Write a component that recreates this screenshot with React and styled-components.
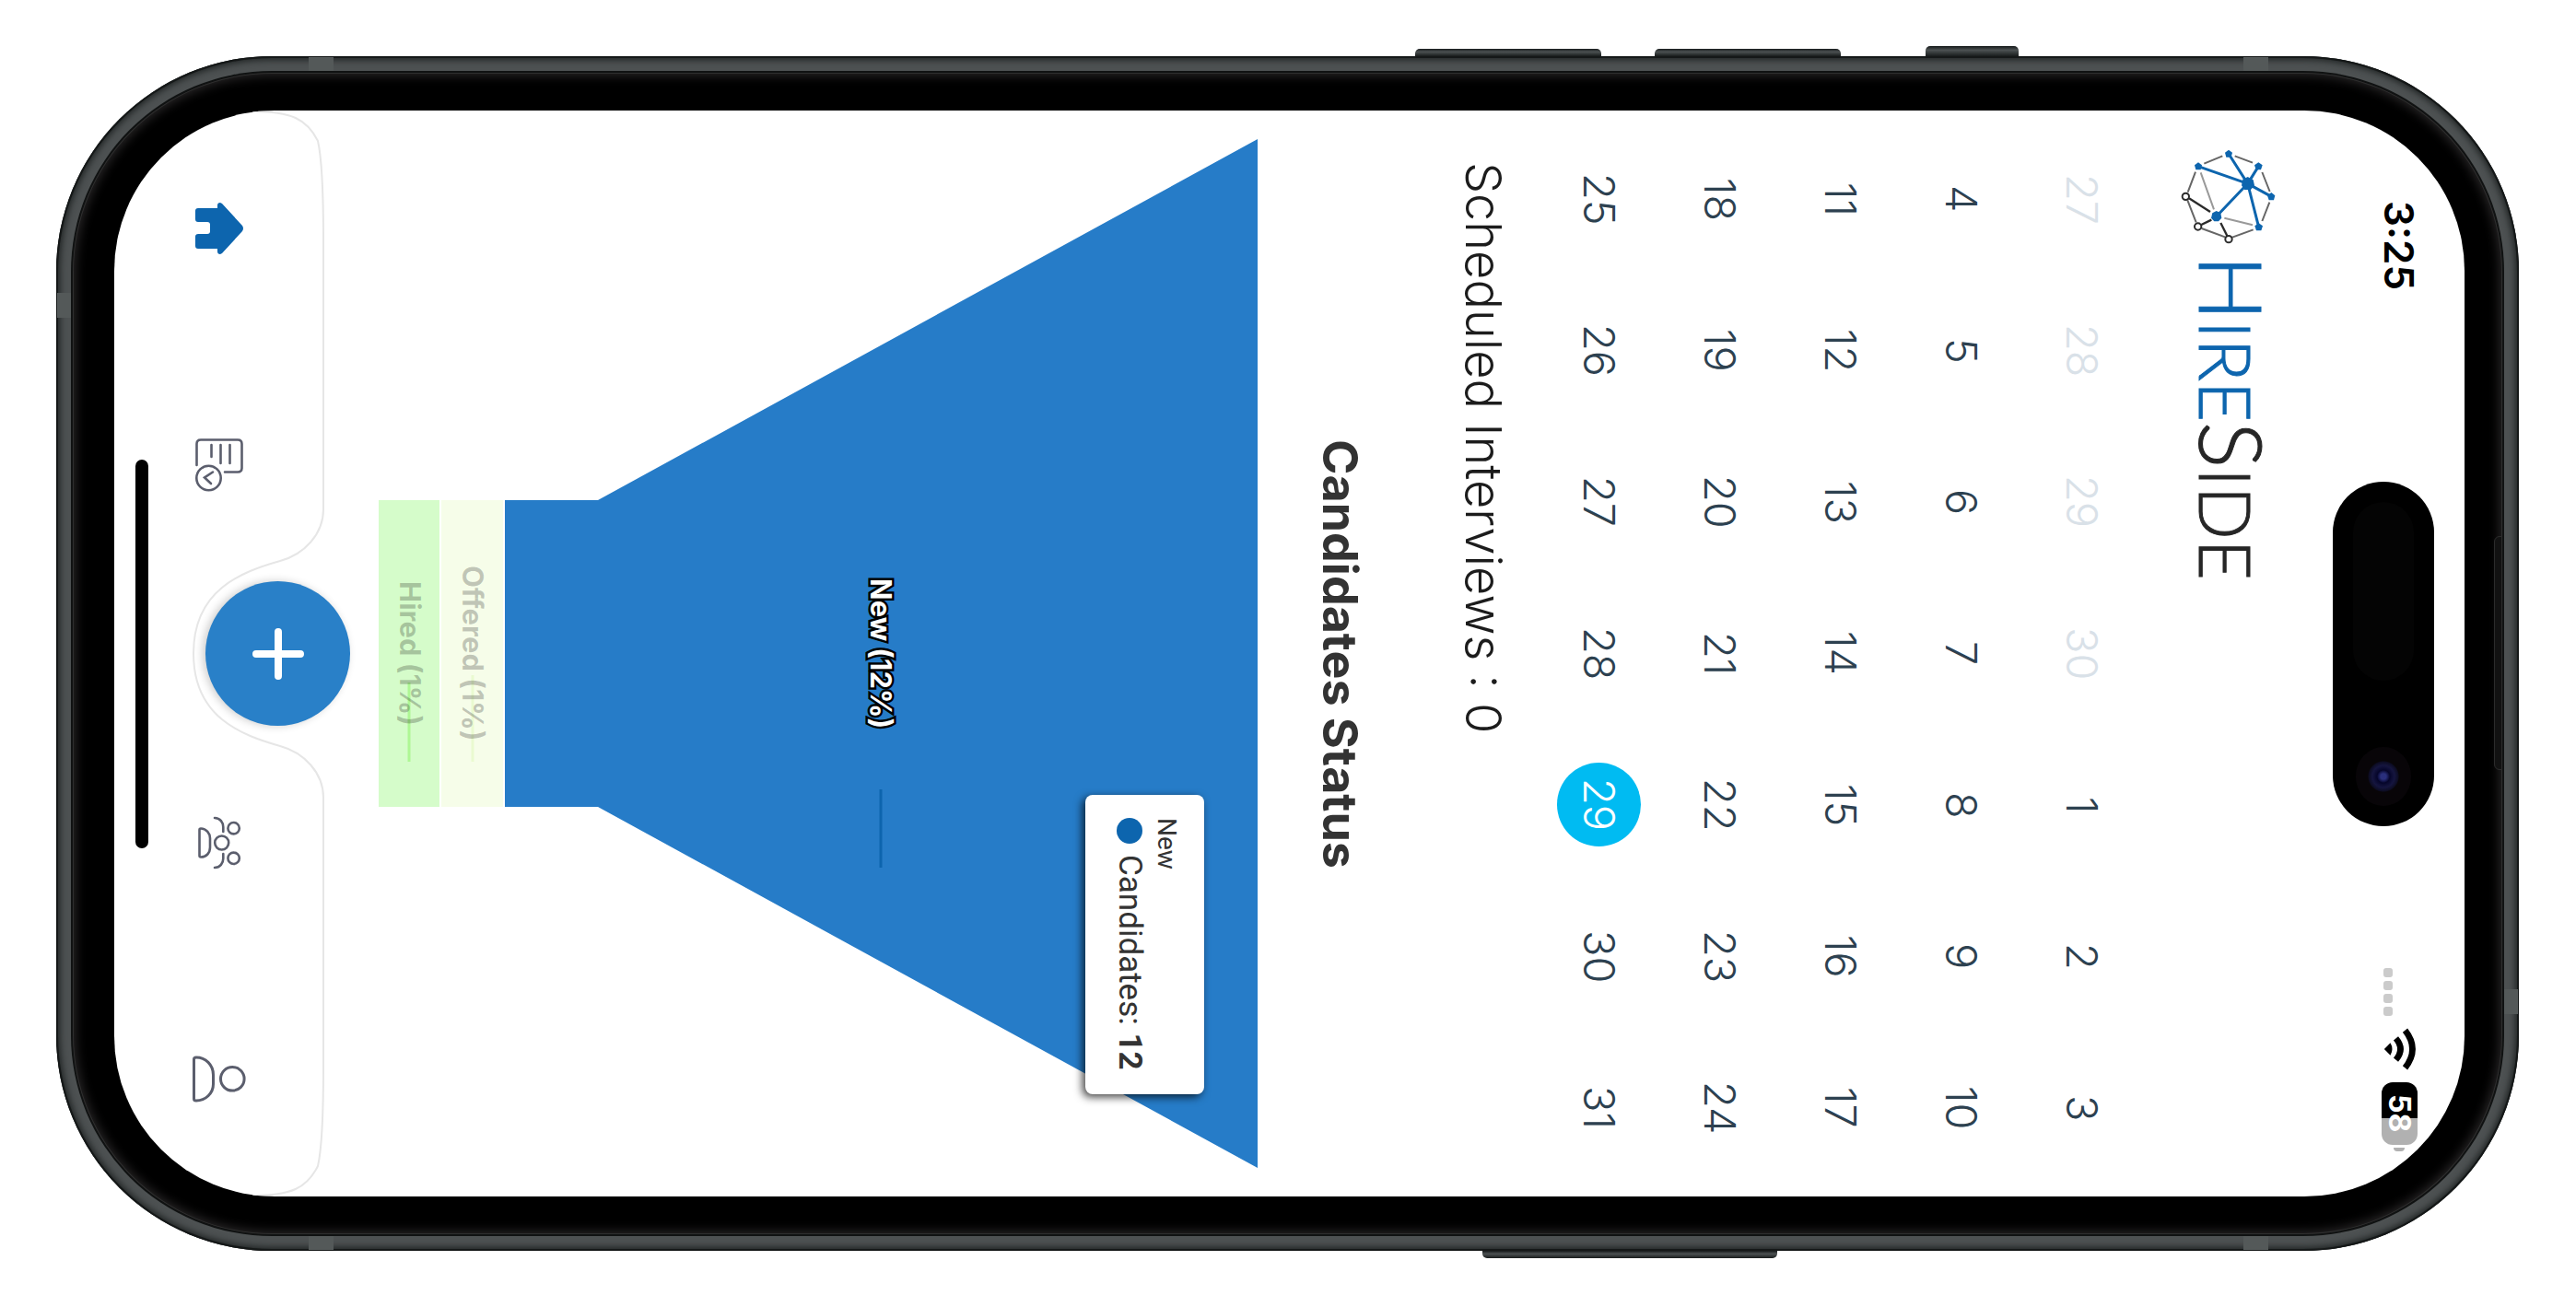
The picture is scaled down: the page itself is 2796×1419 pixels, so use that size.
import React from "react";
import styled, { createGlobalStyle, css } from "styled-components";

const GlobalStyle = createGlobalStyle`
  *, *::before, *::after { box-sizing: border-box; }
  body { margin: 0; background: #fff; }
  button { font: inherit; color: inherit; border: 0; padding: 0; background: none; cursor: pointer; }
`;

/* ---------- Device ---------- */

const Page = styled.main`
  display: flex;
  height: 100vh;
  padding: 61px 62px 61px 61px;
  background: #fff;
`;

const Phone = styled.div`
  position: relative;
  display: flex;
  flex: 1;
  min-height: 0;
  padding: 18px;
  border-radius: 234px;
  background: #4d5152;
  box-shadow: inset 0 0 0 2px #151818, inset 0 0 7px 4px #1f2323;
`;

const SideButton = styled.span`
  position: absolute;
  left: ${(p) => p.$from}%;
  width: ${(p) => p.$size}px;
  height: ${(p) => p.$depth}px;
  background: linear-gradient(#15191a, #4c5152 40%, #191d1d);
  ${(p) =>
    p.$edge === "top"
      ? css`bottom: 100%; border-radius: 5px 5px 0 0;`
      : css`top: 100%; border-radius: 0 0 5px 5px;`}
`;

const Band = styled.span`
  position: absolute;
  background: #545959;
  ${(p) =>
    p.$edge === "top" || p.$edge === "bottom"
      ? css`${p.$edge}: 1px; width: 27px; height: 16px;`
      : css`${p.$edge}: 1px; width: 16px; height: 27px;`}
  ${(p) => css`${p.$side}: ${p.$at}px;`}
`;

const Bezel = styled.div`
  position: relative;
  display: flex;
  flex: 1;
  min-height: 0;
  padding: 41px 41px 41px 45px;
  border-radius: 216px;
  background: #000;
  box-shadow: 0 0 0 2px #101212, inset 0 0 0 1px #2e2e2e, inset 0 0 12px 3px #2a2829;
`;

const Earpiece = styled.span`
  position: absolute;
  right: 0;
  top: 503px;
  width: 9px;
  height: 254px;
  background: #121212;
  border: 1px solid #2c2c2c;
  border-radius: 6px 0 0 6px;
`;

const Screen = styled.div`
  position: relative;
  display: flex;
  flex-direction: column;
  flex: 1;
  overflow: hidden;
  writing-mode: vertical-rl;
  text-orientation: sideways;
  border-radius: 174px;
  background: #fff;
  color: #1c1c1c;
  font-family: Inter, "Liberation Sans", sans-serif;
`;

/* ---------- Status bar ---------- */

const StatusBar = styled.header`
  display: grid;
  grid-template-columns: 1fr auto 1fr;
  block-size: 177px;
  padding-block-start: 33px;
  align-items: start;
`;

const StatusSide = styled.div`
  display: flex;
  align-items: center;
  justify-content: ${(p) => (p.$end ? "flex-end" : "flex-start")};
  gap: 13px;
  block-size: 76px;
  padding-inline: 98px 49px;
`;

const Clock = styled.time`
  font-size: 44px;
  font-weight: 600;
  line-height: 52px;
  color: #000;
`;

const Island = styled.div`
  display: flex;
  align-items: center;
  justify-content: space-between;
  inline-size: 374px;
  block-size: 110px;
  padding-inline: 22px;
  border-radius: 55px;
  background: #000;
`;

const Sensor = styled.span`
  inline-size: 194px;
  block-size: 66px;
  border-radius: 33px;
  background: #040404;
`;

const Lens = styled.span`
  inline-size: 64px;
  block-size: 60px;
  border-radius: 50%;
  background: radial-gradient(circle, #2a2f7c 0 3px, #05052a 7px, #15153f 12px, #0c0c22 16px, #080508 17px);
`;

const Signal = styled.span`
  display: flex;
  gap: 4px;
  block-size: 34px;
  align-items: flex-end;
`;

const SignalDot = styled.i`
  inline-size: 10px;
  block-size: 10px;
  border-radius: 3px;
  background: #cbcbcb;
`;

const Battery = styled.span`
  display: flex;
  align-items: center;
  gap: 3px;
`;

const BatteryLevel = styled.span`
  display: flex;
  align-items: center;
  justify-content: center;
  inline-size: 68px;
  block-size: 39px;
  border-radius: 12px;
  background: linear-gradient(to bottom, #000 58%, #b1b1b1 58%);
  color: #fff;
  font-size: 32px;
  font-weight: 700;
  line-height: 39px;
`;

const BatteryTip = styled.i`
  inline-size: 4px;
  block-size: 12px;
  border-radius: 0 0 6px 6px;
  background: #b1b1b1;
`;

/* ---------- Brand ---------- */

const Brand = styled.div`
  display: flex;
  align-items: center;
  gap: 12px;
  block-size: 158px;
  padding-inline-start: 42px;
`;

const Wordmark = styled.h1`
  margin: 0;
  font-family: Lato, "Liberation Sans", sans-serif;
  font-size: 76px;
  font-weight: 300;
  line-height: 100px;
  color: #262626;
  -webkit-text-stroke: 1px currentColor;
`;

const Initial = styled.span`
  font-size: 94px;
`;

const WordBlue = styled.span`
  color: #0d65ae;
`;

/* ---------- Calendar ---------- */

const Calendar = styled.table`
  inline-size: calc(100% - 28px);
  margin-inline: 14px;
  margin-block-start: 15px;
  border-collapse: collapse;
  table-layout: fixed;
`;

const Week = styled.tr`
  block-size: 131px;
`;

const DayCell = styled.td`
  padding: 0;
  text-align: center;
  vertical-align: middle;
`;

const Day = styled.button`
  display: inline-flex;
  align-items: center;
  justify-content: center;
  inline-size: 91px;
  block-size: 91px;
  vertical-align: middle;
  writing-mode: vertical-rl;
  border-radius: 50%;
  font-size: 47px;
  font-weight: 300;
  line-height: 56px;
  color: ${(p) => (p.$muted ? "#d9e1e8" : "#2d4150")};
  ${(p) => p.$selected && css`background: #00bbf2; color: #fff;`}
`;

const Scheduled = styled.p`
  margin: 0;
  margin-block-start: 28px;
  padding-inline-start: 56px;
  font-size: 54px;
  font-weight: 300;
  line-height: 64px;
`;

/* ---------- Chart ---------- */

const ChartTitle = styled.h2`
  margin: 0;
  margin-block-start: 92px;
  text-align: center;
  font-size: 52px;
  font-weight: 700;
  line-height: 64px;
  color: #333;
`;

const Chart = styled.section`
  position: relative;
  display: flex;
  flex-direction: column;
  block-size: 954px;
  margin-block-start: 57px;
  margin-inline: 31px;
`;

const FunnelShape = styled.svg`
  position: absolute;
  inset: 0;
  width: 100%;
  height: 100%;
`;

const Stage = styled.div`
  position: relative;
  display: flex;
  align-items: center;
  justify-content: center;
  flex: ${(p) => p.$share} 1 0;
`;

const StageLabel = styled.span`
  font-size: 31px;
  font-weight: 700;
  line-height: 40px;
  ${(p) =>
    p.$active
      ? css`
          color: #fff;
          -webkit-text-stroke: 5px #000;
          paint-order: stroke fill;
        `
      : css`color: rgba(0, 0, 0, 0.22);`}
`;

const Tooltip = styled.div`
  position: absolute;
  inset-block-start: 58px;
  inset-inline-start: 712px;
  inline-size: 325px;
  block-size: 129px;
  padding-block-start: 23px;
  padding-inline-start: 25px;
  border-radius: 8px;
  background: #fff;
  box-shadow: -3px 3px 10px rgba(0, 0, 0, 0.75);
  color: #333;
  font-family: Roboto, "Liberation Sans", sans-serif;
`;

const TooltipName = styled.div`
  font-size: 28px;
  line-height: 36px;
`;

const TooltipValue = styled.div`
  display: flex;
  align-items: center;
  gap: 12px;
  font-size: 35px;
  line-height: 44px;
`;

const TooltipDot = styled.i`
  inline-size: 28px;
  block-size: 28px;
  border-radius: 50%;
  background: #0d65ae;
`;

/* ---------- Tab bar ---------- */

const TabBar = styled.nav`
  position: relative;
  display: grid;
  grid-template-columns: 1fr 1fr 155px 1fr 1fr;
  align-items: center;
  justify-items: center;
  block-size: 227px;
  margin-block-start: auto;
`;

const TabOutline = styled.svg`
  position: absolute;
  inset: 0;
  width: 100%;
  height: 100%;
  overflow: visible;
`;

const Tab = styled.button`
  position: relative;
  display: flex;
  align-items: center;
  justify-content: center;
  inline-size: 96px;
  block-size: 96px;
`;

const AddButton = styled.button`
  position: relative;
  display: flex;
  align-items: center;
  justify-content: center;
  align-self: start;
  inline-size: 157px;
  block-size: 157px;
  margin-block-start: -29px;
  border-radius: 50%;
  background: #2980c8;
  box-shadow: -3px 0 10px rgba(0, 0, 0, 0.2);
`;

const HomeIndicator = styled.span`
  position: absolute;
  inset-block-end: 23px;
  inset-inline: 0;
  margin-inline: auto;
  inline-size: 422px;
  block-size: 14px;
  border-radius: 7px;
  background: #000;
`;

/* ---------- Drawings ---------- */

const LogoMark = () => (
  <svg width="104" height="103" viewBox="52 66 312 309" fill="none" aria-hidden="true">
    <g stroke="#666" strokeWidth="6">
      <path d="M128 113 188 88M228 88 286 110M317 141 342 204M341 239 317 300M288 328 220 353M196 352 120 324M74 232 102 304M75 206 100 140" />
    </g>
    <path d="M117 142 160 262M194 290 286 313" stroke="#999" strokeWidth="6" />
    <path d="M79 226 148 270M119 312 152 296M203 348 182 306" stroke="#2b2b2b" strokeWidth="7" />
    <path d="M270 178 109 122M270 178 208 81M270 178 305 122M270 178 347 220M270 178 306 320M270 178 168 285" stroke="#0d65ae" strokeWidth="9" />
    <g fill="#0d65ae">
      <path d="M208 68 220 77 216 92H200L196 77Z" />
      <path d="M305 109 318 118 313 133H297L292 118Z" />
      <path d="M347 207 359 217 355 232H339L334 217Z" />
      <path d="M306 307 319 316 314 331H298L293 316Z" />
      <path d="M109 109 121 118 117 133H101L97 118Z" />
      <path d="M270 156 288 166 292 184 280 198H260L250 184 254 164Z" />
      <path d="M168 267 182 274 185 290 175 301H161L151 290 155 274Z" />
    </g>
    <g fill="#fff" stroke="#2b2b2b" strokeWidth="6">
      <circle cx="208" cy="359" r="11" />
      <circle cx="108" cy="318" r="11" />
      <circle cx="68" cy="220" r="11" />
    </g>
  </svg>
);

const WifiIcon = () => (
  <svg width="35" height="46" viewBox="0 0 100 138" fill="none" aria-hidden="true">
    <path d="M0 69 20 49Q32 69 20 89Z" fill="#000" />
    <path d="M38 34Q68 69 38 104M68 8Q116 69 68 130" stroke="#000" strokeWidth="20" />
  </svg>
);

const FunnelDrawing = () => (
  <FunnelShape viewBox="0 0 954 1117" preserveAspectRatio="none" aria-hidden="true">
    <path d="M954 0V1117L238 725H137V392H238Z" fill="#267cc8" />
    <path d="M68 392H135V725H68Z" fill="#f6fde9" />
    <path d="M0 392H66V725H0Z" fill="#d5fcca" />
    <path d="M545 706V791" stroke="#0d65ae" strokeWidth="3" />
    <path d="M102 582V676" stroke="#eafad0" strokeWidth="3" />
    <path d="M33 590V676" stroke="#aef794" strokeWidth="3" />
  </FunnelShape>
);

const TabBarDrawing = () => (
  <TabOutline viewBox="0 0 227 1179" preserveAspectRatio="none" aria-hidden="true">
    <path
      d="M150 1C192 1 209 9 221 33C226 55 227 95 227 140V433C227 460 206 482 180 489C138 501 86 520 86 589.500C86 659 138 678 180 690C206 697 227 719 227 746V1039C227 1084 226 1124 221 1146C209 1170 192 1178 150 1178"
      fill="#fff"
      stroke="#e6e6e6"
      strokeWidth="2"
    />
  </TabOutline>
);

const HomeIcon = () => (
  <svg width="60" height="60" viewBox="208 218 60 60" aria-hidden="true">
    <path
      d="M236 226V223Q236 220 239 220L241 221 263 245Q265 248 263 251L241 275 239 276Q236 276 236 273V270H215Q212 270 212 267V257Q212 254 215 254H225Q228 254 228 251V244Q228 241 225 241H215Q212 241 212 238V229Q212 226 215 226Z"
      fill="#0d65ae"
    />
  </svg>
);

const JobsIcon = () => (
  <svg width="60" height="60" viewBox="208 474 60 60" fill="none" stroke="#5b5e6d" strokeWidth="2.600" strokeLinecap="round" aria-hidden="true">
    <path d="M213.500 505V482Q213.500 477.500 218 477.500H258Q262.500 477.500 262.500 482V508Q262.500 512.500 258 512.500H244" />
    <path d="M229.500 483V496M239.500 483V503M249.500 483V503" />
    <circle cx="226.500" cy="519" r="13.200" />
    <path d="M231 512.500 222 518.500 229 525" />
  </svg>
);

const TeamIcon = () => (
  <svg width="60" height="60" viewBox="208 886 60 60" fill="none" stroke="#5b5e6d" strokeWidth="2.600" strokeLinecap="round" aria-hidden="true">
    <path d="M218 900.500C224 900.500 228 906 228 911V921C228 927 224 931.500 218 931.500Q216.500 931.500 216.500 930V902Q216.500 900.500 218 900.500Z" />
    <circle cx="240.700" cy="916" r="7.500" />
    <circle cx="253.600" cy="900.200" r="6.200" />
    <circle cx="253.600" cy="932.800" r="6.200" />
    <path d="M233 889C239 889 242.300 894 242.300 899V904M233 943C239 943 242.300 938 242.300 933V928" />
  </svg>
);

const ProfileIcon = () => (
  <svg width="64" height="60" viewBox="206 1142 64 60" fill="none" stroke="#5b5e6d" strokeWidth="3" aria-hidden="true">
    <path d="M213 1149C223 1149 231.500 1157 231.500 1168V1178C231.500 1188 223 1196 213 1196Q210.500 1196 210.500 1194V1151Q210.500 1149 213 1149Z" />
    <circle cx="252.300" cy="1172.300" r="12.800" />
  </svg>
);

const PlusIcon = () => (
  <svg width="56" height="56" viewBox="0 0 56 56" stroke="#fff" strokeWidth="8" strokeLinecap="round" aria-hidden="true">
    <path d="M4 28H52M28 4V52" />
  </svg>
);

/* ---------- Data ---------- */

const weeks = [
  [27, 28, 29, 30, 1, 2, 3],
  [4, 5, 6, 7, 8, 9, 10],
  [11, 12, 13, 14, 15, 16, 17],
  [18, 19, 20, 21, 22, 23, 24],
  [25, 26, 27, 28, 29, 30, 31],
];

const stages = [
  { label: "New (12%)", share: 818, active: true },
  { label: "Offered (1%)", share: 69 },
  { label: "Hired (1%)", share: 67 },
];

export default function App() {
  return (
    <>
      <GlobalStyle />
      <Page>
        <Phone>
          <SideButton $edge="top" $from={55.2} $size={202} $depth={8} />
          <SideButton $edge="top" $from={64.9} $size={202} $depth={8} />
          <SideButton $edge="top" $from={75.9} $size={101} $depth={11} />
          <SideButton $edge="bottom" $from={57.9} $size={320} $depth={8} />
          <Band $edge="top" $side="left" $at={274} />
          <Band $edge="top" $side="right" $at={272} />
          <Band $edge="bottom" $side="left" $at={274} />
          <Band $edge="bottom" $side="right" $at={272} />
          <Band $edge="left" $side="top" $at={257} />
          <Band $edge="right" $side="bottom" $at={257} />
          <Bezel>
            <Earpiece />
            <Screen>
              <StatusBar>
                <StatusSide>
                  <Clock>3:25</Clock>
                </StatusSide>
                <Island>
                  <Sensor />
                  <Lens />
                </Island>
                <StatusSide $end>
                  <Signal>
                    <SignalDot />
                    <SignalDot />
                    <SignalDot />
                    <SignalDot />
                  </Signal>
                  <WifiIcon />
                  <Battery>
                    <BatteryLevel>58</BatteryLevel>
                    <BatteryTip />
                  </Battery>
                </StatusSide>
              </StatusBar>

              <Brand>
                <LogoMark />
                <Wordmark>
                  <WordBlue>
                    <Initial>H</Initial>IRE
                  </WordBlue>
                  <Initial>S</Initial>IDE
                </Wordmark>
              </Brand>

              <Calendar aria-label="Interview calendar">
                <tbody>
                  {weeks.map((week, row) => (
                    <Week key={row}>
                      {week.map((day) => (
                        <DayCell key={day}>
                          <Day type="button" $muted={row === 0 && day > 20} $selected={row === 4 && day === 29}>
                            {day}
                          </Day>
                        </DayCell>
                      ))}
                    </Week>
                  ))}
                </tbody>
              </Calendar>

              <Scheduled>Scheduled Interviews : 0</Scheduled>

              <ChartTitle>Candidates Status</ChartTitle>
              <Chart>
                <FunnelDrawing />
                {stages.map((stage) => (
                  <Stage key={stage.label} $share={stage.share}>
                    <StageLabel $active={stage.active}>{stage.label}</StageLabel>
                  </Stage>
                ))}
                <Tooltip role="tooltip">
                  <TooltipName>New</TooltipName>
                  <TooltipValue>
                    <TooltipDot />
                    <span>
                      Candidates: <b>12</b>
                    </span>
                  </TooltipValue>
                </Tooltip>
              </Chart>

              <TabBar>
                <TabBarDrawing />
                <Tab type="button" aria-label="Home"><HomeIcon /></Tab>
                <Tab type="button" aria-label="Jobs"><JobsIcon /></Tab>
                <AddButton type="button" aria-label="Add"><PlusIcon /></AddButton>
                <Tab type="button" aria-label="Candidates"><TeamIcon /></Tab>
                <Tab type="button" aria-label="Profile"><ProfileIcon /></Tab>
                <HomeIndicator />
              </TabBar>
            </Screen>
          </Bezel>
        </Phone>
      </Page>
    </>
  );
}
